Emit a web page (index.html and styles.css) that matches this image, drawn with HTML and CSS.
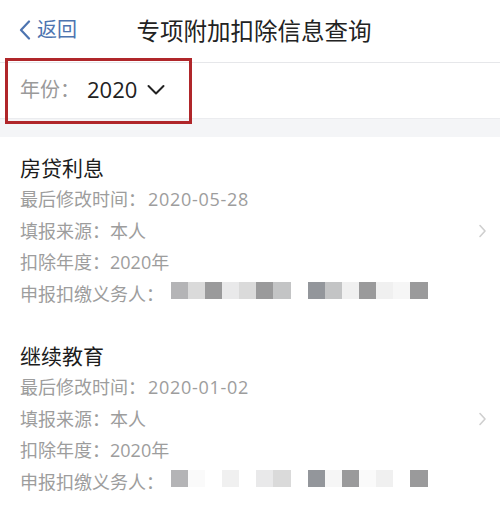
FILE: index.html
```html
<!DOCTYPE html>
<html lang="zh-CN">
<head>
<meta charset="utf-8">
<title>专项附加扣除信息查询</title>
<link rel="stylesheet" href="styles.css">
</head>
<body>
<div class="page">
  <header class="nav">
    <div class="back">
      <svg class="back-icon" width="14" height="20" viewBox="0 0 14 20"><polyline points="11,1.5 3,10 11,18.5" fill="none" stroke="#4d74b0" stroke-width="2.2" stroke-linecap="round" stroke-linejoin="round"/></svg>
      <span class="back-text">返回</span>
    </div>
    <h1 class="nav-title">专项附加扣除信息查询</h1>
    <div class="nav-right"></div>
  </header>

  <div class="year-row">
    <span class="year-label">年份：</span>
    <span class="year-value">2020</span>
    <svg class="year-caret" width="18" height="12" viewBox="0 0 18 12"><polyline points="1.5,2 9,9.5 16.5,2" fill="none" stroke="#222" stroke-width="2" stroke-linecap="round" stroke-linejoin="round"/></svg>
    <div class="highlight"></div>
  </div>

  <div class="band"></div>

  <div class="item">
    <div class="item-body">
      <div class="item-title">房贷利息</div>
      <div class="line">最后修改时间：<span class="val">2020-05-28</span></div>
      <div class="line">填报来源：本人</div>
      <div class="line">扣除年度：2020年</div>
      <div class="line">申报扣缴义务人：<span class="mosaic"><i class="c2"></i><i class="c4"></i><i class="c1"></i><i class="c5"></i><i class="c4"></i><i class="c1"></i><i class="c3 wide"></i><i class="c0"></i><i class="c1b"></i><i class="c3"></i><i class="c6"></i><i class="c1"></i><i class="c6"></i><i class="c7"></i><i class="c1 wide"></i></span></div>
    </div>
    <svg class="arrow" width="9" height="14" viewBox="0 0 9 14"><polyline points="2,1.5 7,7 2,12.5" fill="none" stroke="#cfcfcf" stroke-width="1.6" stroke-linecap="round" stroke-linejoin="round"/></svg>
  </div>

  <div class="item">
    <div class="item-body">
      <div class="item-title">继续教育</div>
      <div class="line">最后修改时间：<span class="val">2020-01-02</span></div>
      <div class="line">填报来源：本人</div>
      <div class="line">扣除年度：2020年</div>
      <div class="line">申报扣缴义务人：<span class="mosaic"><i class="c2"></i><i class="c8"></i><i class="c0"></i><i class="c6"></i><i class="c0"></i><i class="c5"></i><i class="c4 wide"></i><i class="c0"></i><i class="c1b"></i><i class="c7"></i><i class="c1"></i><i class="c8"></i><i class="c6"></i><i class="c0"></i><i class="c1 wide"></i></span></div>
    </div>
    <svg class="arrow" width="9" height="14" viewBox="0 0 9 14"><polyline points="2,1.5 7,7 2,12.5" fill="none" stroke="#cfcfcf" stroke-width="1.6" stroke-linecap="round" stroke-linejoin="round"/></svg>
  </div>
</div>
</body>
</html>
```

FILE: styles.css
```css
* { box-sizing: border-box; }
html, body { margin: 0; padding: 0; background: #fff; }
body {
  font-family: "Open Sans", "Noto Sans CJK SC", sans-serif;
  color: #222;
}
.page { width: 500px; height: 509px; overflow: hidden; }

.nav {
  height: 63px;
  border-bottom: 1px solid #e6e7ea;
  display: grid;
  grid-template-columns: 1fr auto 1fr;
  align-items: center;
  padding-left: 8px;
}
.back {
  display: flex;
  align-items: center;
  gap: 5px;
  padding-left: 10px;
  padding-bottom: 2px;
}
.back-icon { display: block; }
.back-text { font-size: 20px; color: #4d74b0; line-height: 1; }
.nav-title {
  margin: 0;
  font-size: 23.5px;
  font-weight: 400;
  color: #222;
  padding-bottom: 2px;
}

.year-row {
  position: relative;
  height: 56px;
  border-bottom: 1px solid #ebecef;
  display: flex;
  align-items: center;
  padding-left: 20px;
  padding-bottom: 4px;
}
.year-label { font-size: 20px; color: #9a9a9a; width: 67px; }
.year-value { font-size: 22px; color: #222; }
.year-caret { margin-left: 10px; margin-top: 2px; }
.highlight {
  position: absolute;
  left: 5px;
  top: -5px;
  width: 187px;
  height: 66px;
  border: 3px solid #b0262a;
}

.band { height: 18px; background: #f4f5f7; }

.item {
  display: flex;
  align-items: center;
  padding: 15px 13px 15px 20px;
}
.item-body { flex: 1; }
.item-title { font-size: 21px; line-height: 32px; color: #1c1c1c; }
.line {
  font-size: 18px;
  line-height: 31.5px;
  color: #9d9d9d;
  display: flex;
  align-items: center;
}
.val { margin-left: 2px; letter-spacing: 0.7px; }

.mosaic { display: flex; margin-left: 7px; margin-top: -7px; }
.mosaic i { display: block; width: 17px; height: 17px; }
.mosaic i.wide { width: 18px; }
.c0 { background: #ffffff; }
.c1 { background: #9a9a9b; }
.c1b { background: #93969b; }
.c2 { background: #b4b4b6; }
.c3 { background: #c3c4c5; }
.c4 { background: #dadada; }
.c5 { background: #e9e9ea; }
.c6 { background: #f0f0f0; }
.c7 { background: #f6f6f6; }
.c8 { background: #fafafa; }

.arrow { display: block; }
```
